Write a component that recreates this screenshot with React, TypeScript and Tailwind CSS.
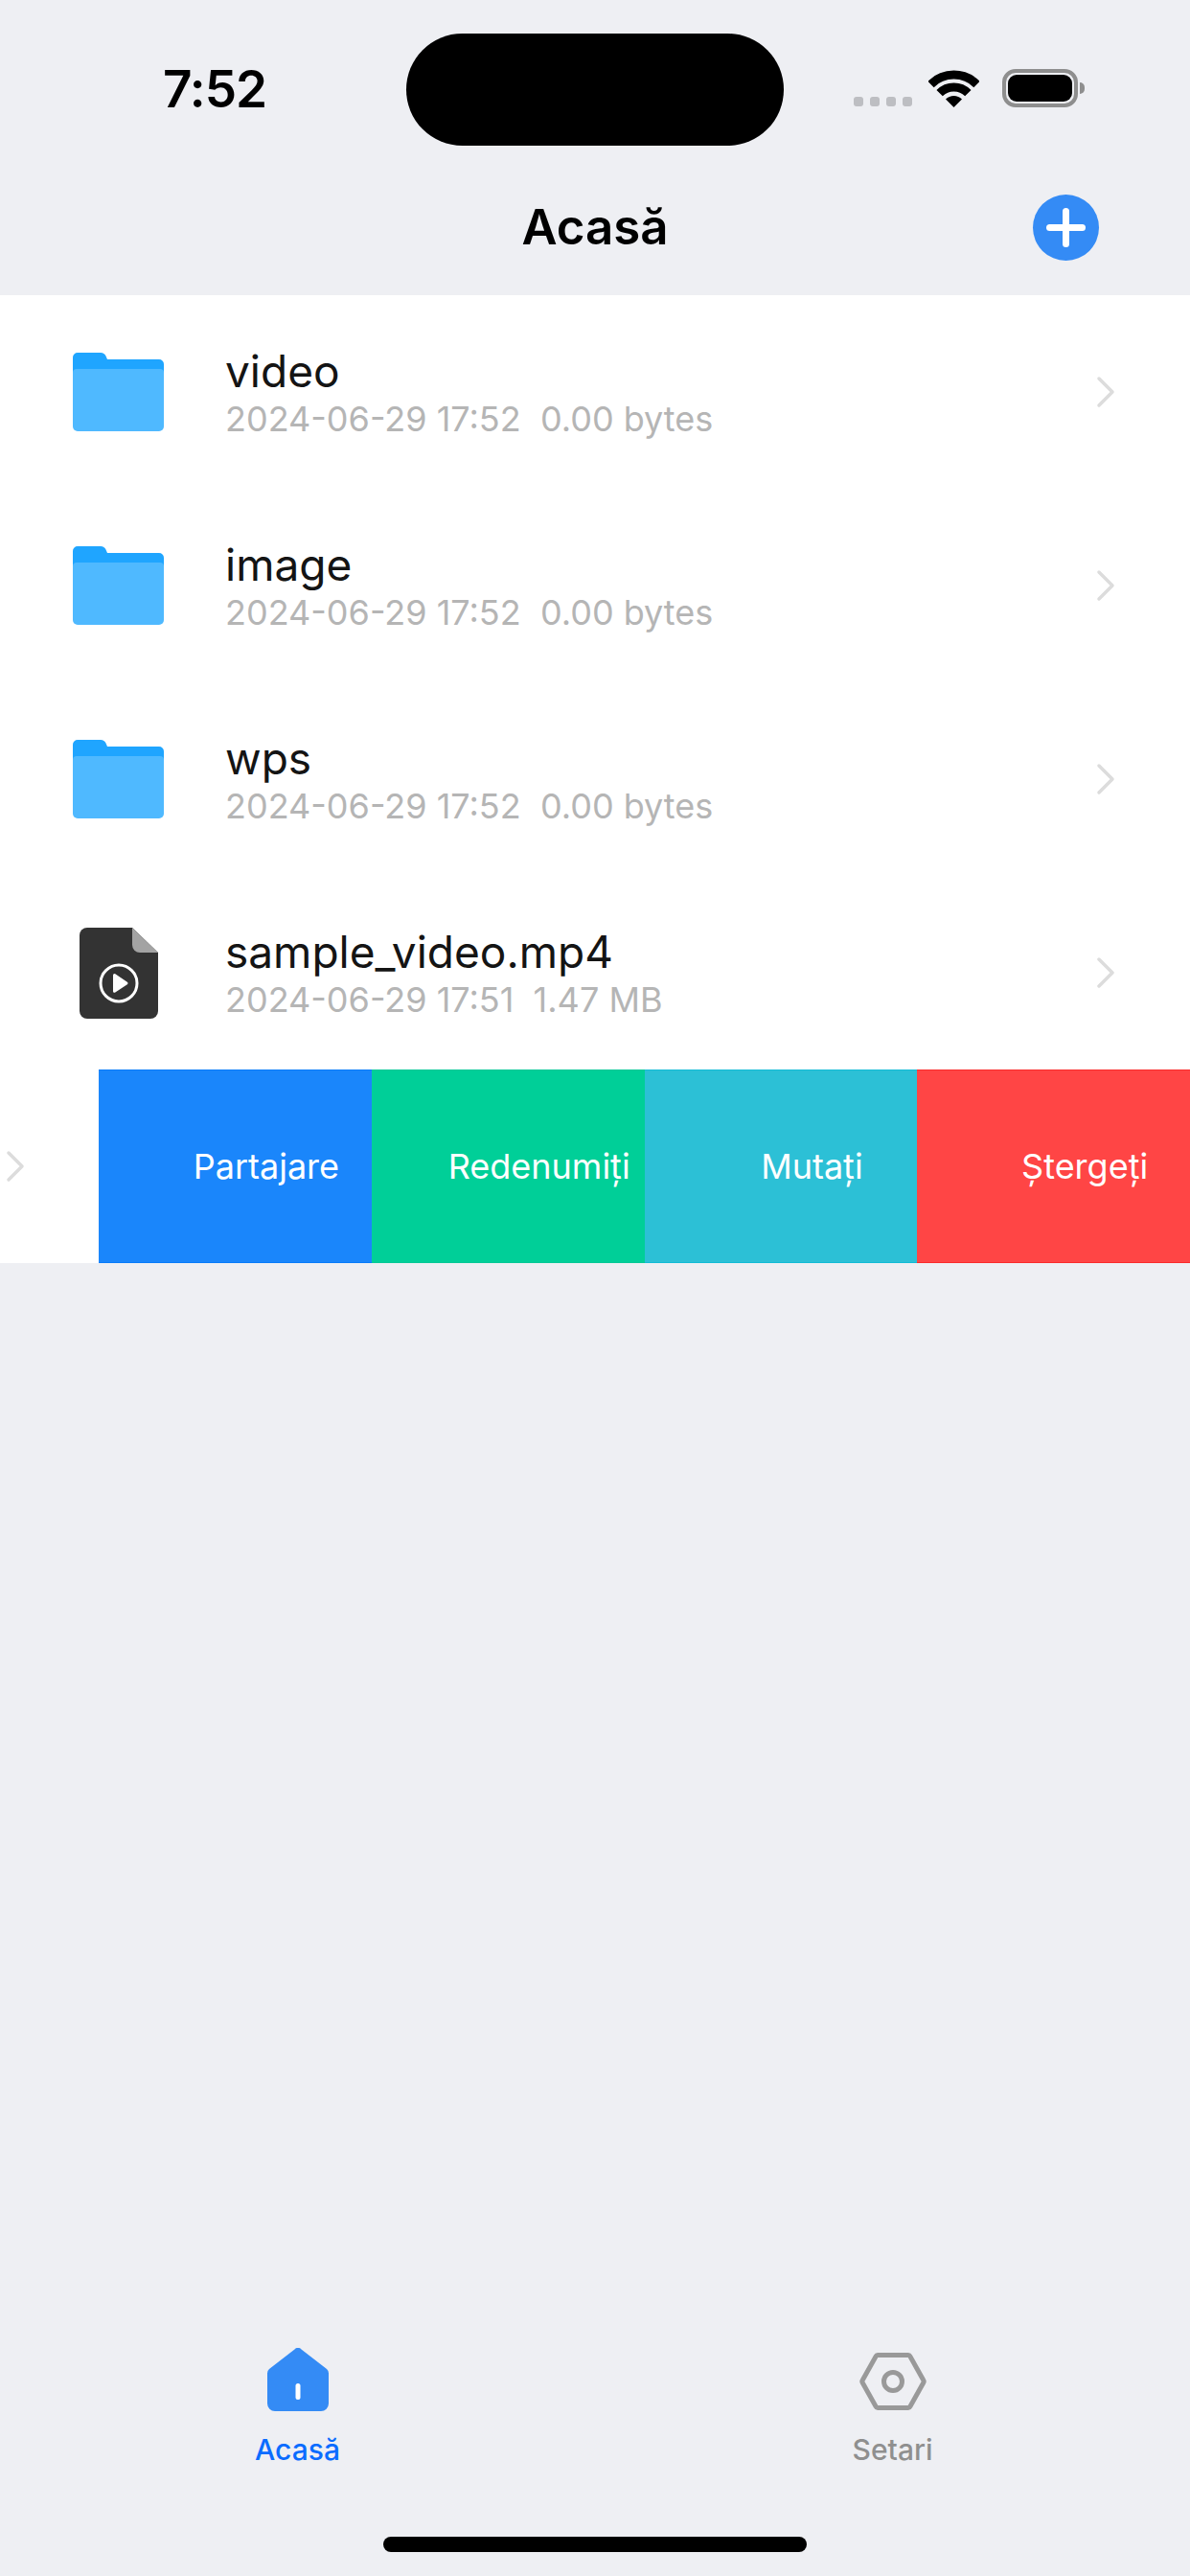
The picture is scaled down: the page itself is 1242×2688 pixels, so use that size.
import { ChevronRight } from "lucide-react";

type FileEntry = {
  name: string;
  meta: string;
  kind: "folder" | "video";
};

const entries: FileEntry[] = [
  { name: "video", meta: "2024-06-29 17:52  0.00 bytes", kind: "folder" },
  { name: "image", meta: "2024-06-29 17:52  0.00 bytes", kind: "folder" },
  { name: "wps", meta: "2024-06-29 17:52  0.00 bytes", kind: "folder" },
  { name: "sample_video.mp4", meta: "2024-06-29 17:51  1.47 MB", kind: "video" },
];

const swipeActions = [
  { label: "Partajare", className: "bg-[#1a86fb] border-[#0a7cfa]" },
  { label: "Redenumiți", className: "bg-[#00cf98] border-[#00c896]" },
  { label: "Mutați", className: "bg-[#2cc0d6] border-[#14bcd6]" },
  { label: "Ștergeți", className: "bg-[#ff4545] border-[#fa2c2c]" },
];

function FolderIcon() {
  return (
    <svg width="95" height="82" viewBox="0 0 95 82">
      <path
        d="M0 5a5 5 0 0 1 5-5h24a6 6 0 0 1 5.500 3.600L36 7h54a5 5 0 0 1 5 5v20H0z"
        fill="#1fa5ff"
      />
      <path d="M0 21a4 4 0 0 1 4-4h87a4 4 0 0 1 4 4v56a5 5 0 0 1-5 5H5a5 5 0 0 1-5-5z" fill="#4fb9ff" />
    </svg>
  );
}

function VideoFileIcon() {
  return (
    <svg width="82" height="95" viewBox="0 0 82 95">
      <path
        d="M8 0h47l27 26v61a8 8 0 0 1-8 8H8a8 8 0 0 1-8-8V8a8 8 0 0 1 8-8z"
        fill="#333333"
      />
      <path d="M55 0l27 26H63a8 8 0 0 1-8-8z" fill="#a3a3a3" />
      <circle cx="41" cy="58" r="19" fill="none" stroke="#ffffff" strokeWidth="3" />
      <path d="M35 49.500a1.500 1.500 0 0 1 2.300-1.200l12.500 8.400a1.500 1.500 0 0 1 0 2.500l-12.500 8.400a1.500 1.500 0 0 1-2.300-1.200z" fill="#ffffff" />
    </svg>
  );
}

function WifiIcon() {
  return (
    <svg width="53" height="39" viewBox="0 0 53 39">
      <path d="M2.500 15a34 34 0 0 1 48 0" fill="none" stroke="#000" strokeWidth="9" />
      <path d="M11.650 24.150a21 21 0 0 1 29.700 0" fill="none" stroke="#000" strokeWidth="9" />
      <path d="M26.500 39L18 30.500a12 12 0 0 1 17 0z" fill="#000" />
    </svg>
  );
}

function HomeTabIcon() {
  return (
    <svg width="64" height="66" viewBox="0 0 64 66">
      <path
        d="M28.500 1.500a4.500 4.500 0 0 1 7 0L62 22a6 6 0 0 1 2 4.500V58a8 8 0 0 1-8 8H8a8 8 0 0 1-8-8V26.500A6 6 0 0 1 2 22z"
        fill="#348bf5"
      />
      <rect x="29.500" y="37" width="5" height="17" rx="2.500" fill="#ffffff" />
    </svg>
  );
}

function SettingsTabIcon() {
  return (
    <svg width="70" height="60" viewBox="0 0 70 60">
      <path
        d="M19 2.500h32a2 2 0 0 1 1.800 1.200l14 25a2.500 2.500 0 0 1 0 2.600l-14 25a2 2 0 0 1-1.800 1.200H19a2 2 0 0 1-1.800-1.200l-14-25a2.500 2.500 0 0 1 0-2.600l14-25A2 2 0 0 1 19 2.500z"
        fill="none"
        stroke="#999999"
        strokeWidth="5"
      />
      <circle cx="35" cy="30" r="9.500" fill="none" stroke="#999999" strokeWidth="5" />
    </svg>
  );
}

function StatusBar() {
  return (
    <div className="pt-[35px] grid grid-cols-[424px_394px_1fr] h-[152px]">
      <div className="pl-[170px] flex items-center">
        <span className="text-[53px] leading-none font-semibold text-black tracking-[-1px]">7:52</span>
      </div>
      <div className="rounded-full bg-black" />
      <div className="pl-[73px] pt-[37px] flex items-start">
        <div className="flex gap-[7px] mt-[29px]">
          <span className="w-[10px] h-[10px] rounded-[3px] bg-[#bdbec2]" />
          <span className="w-[10px] h-[10px] rounded-[3px] bg-[#bdbec2]" />
          <span className="w-[10px] h-[10px] rounded-[3px] bg-[#bdbec2]" />
          <span className="w-[10px] h-[10px] rounded-[3px] bg-[#bdbec2]" />
        </div>
        <div className="ml-[17px] mt-[1px]">
          <WifiIcon />
        </div>
        <div className="ml-[24px] flex items-center">
          <div className="w-[79px] h-[40px] rounded-[14px] border-[4px] border-[#8e8e8e] p-[2px]">
            <div className="w-full h-full rounded-[9px] bg-black" />
          </div>
          <div className="w-[5px] h-[12px] ml-[2px] rounded-r-full bg-[#8e8e8e]" />
        </div>
      </div>
    </div>
  );
}

function NavBar() {
  return (
    <div className="h-[156px] pt-[51px] grid grid-cols-[1fr_auto_1fr] items-start">
      <div />
      <h1 className="h-[69px] flex items-center text-[51px] font-semibold text-black">Acasă</h1>
      <div className="flex justify-end pr-[95px]">
        <button className="relative w-[69px] h-[69px] rounded-full bg-[#348bf5]">
          <span className="absolute left-[14px] top-[31px] w-[41px] h-[7px] rounded-full bg-white" />
          <span className="absolute left-[31px] top-[14px] w-[7px] h-[41px] rounded-full bg-white" />
        </button>
      </div>
    </div>
  );
}

function FileRow({ entry }: { entry: FileEntry }) {
  return (
    <div className="h-[202px] flex items-center bg-white">
      <div className="w-[235px] flex justify-center pr-[-0px]">
        <div className="w-[95px] mr-[-12px] flex justify-center">
          {entry.kind === "folder" ? <FolderIcon /> : <VideoFileIcon />}
        </div>
      </div>
      <div className="flex-1 min-w-0">
        <div className="text-[46px] leading-[56px] text-[#141414]">{entry.name}</div>
        <div className="text-[36px] leading-[44px] text-[#b5b5b5] whitespace-pre">{entry.meta}</div>
      </div>
      <ChevronRight className="mr-[60px] w-[56px] h-[56px] text-[#dcdcdc]" strokeWidth={1.5} />
    </div>
  );
}

function SwipedRow() {
  return (
    <div className="h-[202px] flex bg-white overflow-hidden">
      <div className="w-[103px] flex items-center">
        <ChevronRight className="-ml-[12px] w-[56px] h-[56px] text-[#dcdcdc]" strokeWidth={1.5} />
      </div>
      {swipeActions.map((action) => (
        <button
          key={action.label}
          className={`flex-1 pl-[65px] flex items-center justify-center border-y text-[36px] text-white whitespace-nowrap ${action.className}`}
        >
          {action.label}
        </button>
      ))}
    </div>
  );
}

function TabBar() {
  return (
    <div className="mt-auto">
      <div className="grid grid-cols-2">
        <div className="flex flex-col items-center">
          <HomeTabIcon />
          <span className="mt-[22px] text-[30px] leading-[36px] font-medium text-[#0a6cff]">Acasă</span>
        </div>
        <div className="flex flex-col items-center pt-[5px]">
          <SettingsTabIcon />
          <span className="mt-[23px] text-[30px] leading-[36px] font-medium text-[#8f8f8f]">Setari</span>
        </div>
      </div>
      <div className="flex justify-center pt-[73px] pb-[25px]">
        <div className="w-[442px] h-[16px] rounded-full bg-black" />
      </div>
    </div>
  );
}

export default function App() {
  return (
    <div className="w-[1242px] h-[2688px] flex flex-col bg-[#eeeff3] font-['Inter',sans-serif] overflow-hidden">
      <StatusBar />
      <NavBar />
      {entries.map((entry) => (
        <FileRow key={entry.name} entry={entry} />
      ))}
      <SwipedRow />
      <TabBar />
    </div>
  );
}
